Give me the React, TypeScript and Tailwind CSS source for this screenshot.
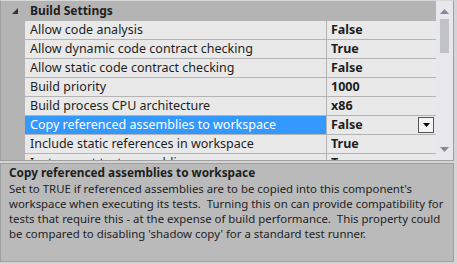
const ROWS = [
  { name: 'Allow code analysis', value: 'False' },
  { name: 'Allow dynamic code contract checking', value: 'True' },
  { name: 'Allow static code contract checking', value: 'False' },
  { name: 'Build priority', value: '1000' },
  { name: 'Build process CPU architecture', value: 'x86' },
  { name: 'Copy referenced assemblies to workspace', value: 'False', selected: true },
  { name: 'Include static references in workspace', value: 'True' },
  { name: 'Instrument test assemblies', value: 'True' },
];

export default function App() {
  return (
    <div
      className="w-[457px] h-[264px] bg-[#d4d4d4] overflow-hidden text-[12.5px] text-[#1e1e1e]"
      style={{ fontFamily: '"Noto Sans", "Open Sans", sans-serif' }}
    >
      {/* property grid */}
      <div className="w-[454px] h-[161px] border border-[#a0a0a0] border-t-[#d8d8d8] bg-[#b4b4b4] flex">
        <div className="flex-1 flex flex-col overflow-hidden">
          <div className="h-[20px] flex items-center shrink-0">
            <span className="w-[24px] flex justify-center pl-[4px]">
              <svg width="7" height="7" viewBox="0 0 7 7">
                <path d="M6 0 L6 6 L0 6 Z" fill="#333" />
              </svg>
            </span>
            <span className="font-bold pl-[5px] leading-none text-[12px]">Build Settings</span>
          </div>
          {ROWS.map((r) => (
            <div key={r.name} className="h-[19px] flex shrink-0">
              <div className="w-[24px] shrink-0" />
              <div
                className={`w-[302px] shrink-0 border-b border-r border-[#b4b4b4] pl-[5px] flex items-center whitespace-nowrap overflow-hidden ${
                  r.selected ? 'bg-[#3399ff] text-white' : 'bg-[#e9e9ea]'
                }`}
              >
                {r.name}
              </div>
              <div className="flex-1 border-b border-[#b4b4b4] bg-[#e9e9ea] pl-[4px] flex items-center font-bold relative">
                {r.value}
                {r.selected && (
                  <span className="absolute right-[2px] top-[1px] w-[16px] h-[16px] border border-[#555] bg-[#f4f4f4] flex items-center justify-center">
                    <svg width="7" height="4" viewBox="0 0 7 4">
                      <path d="M0 0 L7 0 L3.5 4 Z" fill="#000" />
                    </svg>
                  </span>
                )}
              </div>
            </div>
          ))}
        </div>
        {/* scrollbar */}
        <div className="w-[17px] bg-[#e8e8ec] flex flex-col items-center shrink-0">
          <svg width="9" height="5" viewBox="0 0 9 5" className="mt-[8px]">
            <path d="M0 5 L9 5 L4.5 0 Z" fill="#868999" />
          </svg>
          <div className="w-[9px] h-[34px] bg-[#c2c3c9] mt-[5px]" />
          <div className="flex-1" />
          <svg width="9" height="5" viewBox="0 0 9 5" className="mb-[8px]">
            <path d="M0 0 L9 0 L4.5 5 Z" fill="#868999" />
          </svg>
        </div>
      </div>
      {/* description */}
      <div className="w-[454px] h-[99px] mt-[2px] border border-[#a0a0a0] bg-[#bababa] px-[8px] overflow-hidden">
        <div className="font-bold leading-[14px] text-[11.8px] mt-[1px]">Copy referenced assemblies to workspace</div>
        <p className="leading-[15px] whitespace-pre text-[11.4px] mt-[2px]">
          {"Set to TRUE if referenced assemblies are to be copied into this component's\nworkspace when executing its tests.  Turning this on can provide compatibility for\ntests that require this - at the expense of build performance.  This property could\nbe compared to disabling 'shadow copy' for a standard test runner."}
        </p>
      </div>
    </div>
  );
}
